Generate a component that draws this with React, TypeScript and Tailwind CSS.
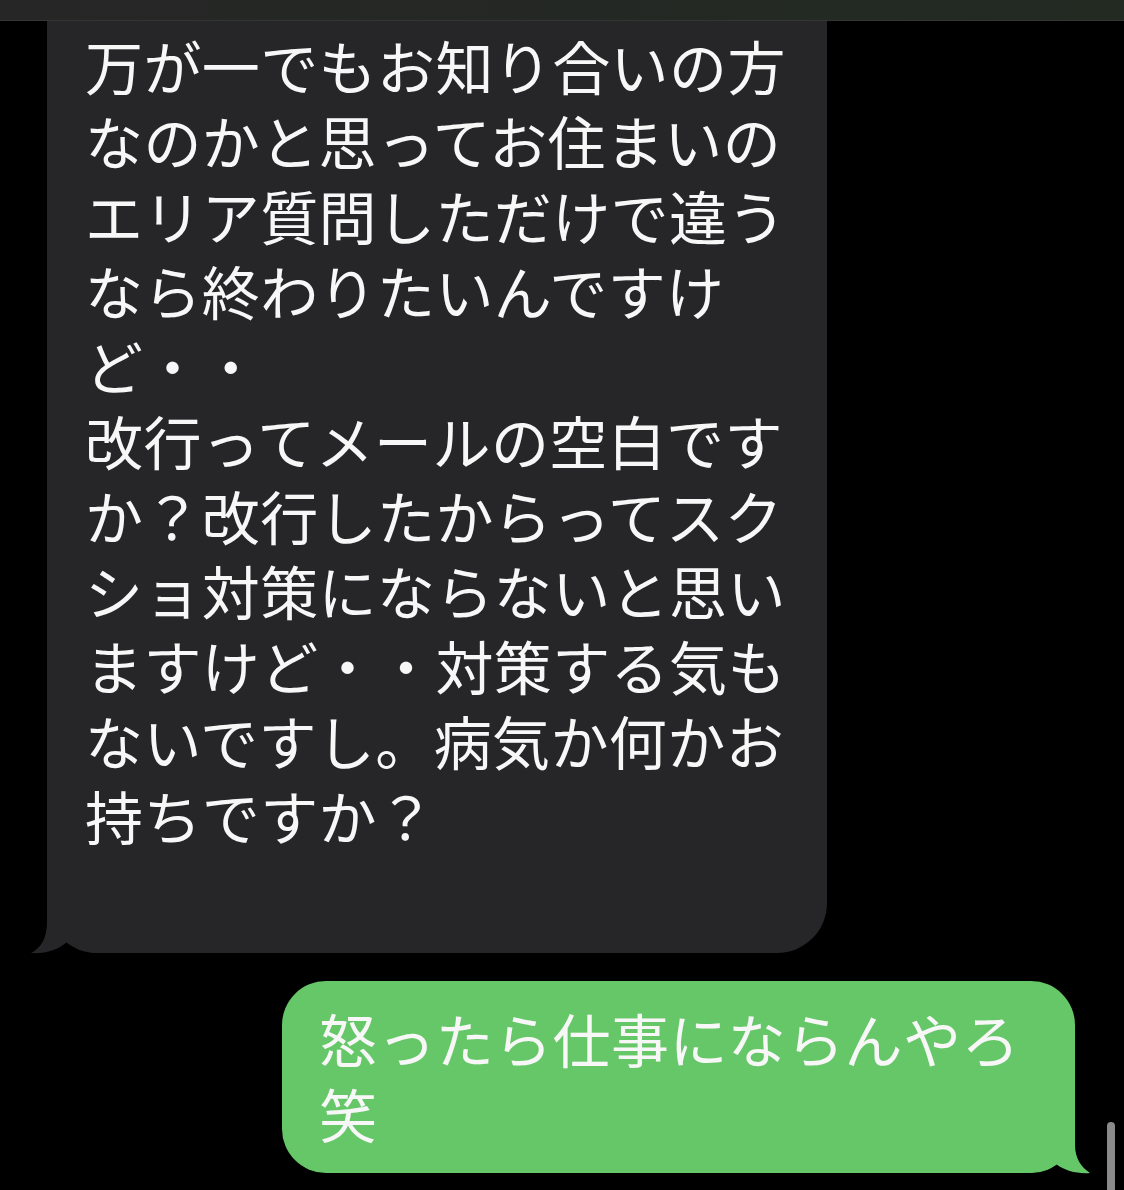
import React from 'react';

const font = { fontFamily: '"Noto Sans CJK JP", "Noto Sans", sans-serif' };

const incoming = [
    '万が一でもお知り合いの方',
    'なのかと思ってお住まいの',
    'エリア質問しただけで違う',
    'なら終わりたいんですけ',
    'ど・・',
    '改行ってメールの空白です',
    'か？改行したからってスク',
    'ショ対策にならないと思い',
    'ますけど・・対策する気も',
    'ないですし。病気か何かお',
    '持ちですか？',
];

const outgoing = ['怒ったら仕事にならんやろ', '笑'];

const Lines = ({ lines }: { lines: string[] }) => (
    <div className="text-[58px] leading-[75px] tracking-[0.4px] text-[#f7f7f7] whitespace-nowrap" style={font}>
        {lines.map((line, i) => (
            <div key={i}>{line}</div>
        ))}
    </div>
);

const App = () => {
    return (
        <div className="relative w-[1124px] h-[1190px] bg-black overflow-hidden">
            {/* status strip */}
            <div className="h-[21px] bg-gradient-to-r from-[#262626] via-[#242824] to-[#222a22] border-b border-[#333633]" />

            {/* received bubble */}
            <div className="ml-[47px] w-[780px] h-[932px] bg-[#262628] rounded-b-[50px] pl-[38px] pt-[7px]">
                <Lines lines={incoming} />
            </div>
            <svg className="absolute left-0 top-[880px]" width="120" height="80" viewBox="0 880 120 80">
                <path
                    d="M47 890 L47 922 C47 938 41 948 31 953 C45 954 58 950 67 942 C78 950 88 953 100 953 L100 890 Z"
                    fill="#262628"
                />
            </svg>

            {/* sent bubble */}
            <div className="mt-[28px] ml-[282px] w-[793px] h-[192px] bg-[#66c768] rounded-[44px] pl-[37px] pt-[20px]">
                <Lines lines={outgoing} />
            </div>
            <svg className="absolute left-[1010px] top-[1110px]" width="90" height="70" viewBox="1010 1110 90 70">
                <path
                    d="M1075 1115 L1075 1145 C1075 1158 1081 1167 1090 1173 C1078 1174 1065 1171 1056 1164 C1046 1170 1036 1173 1025 1173 L1025 1115 Z"
                    fill="#66c768"
                />
            </svg>

            {/* scroll indicator */}
            <div className="absolute left-[1107px] top-[1122px] w-[8px] h-[80px] rounded-full bg-[#8a8a8a]" />
        </div>
    );
};

export default App;
